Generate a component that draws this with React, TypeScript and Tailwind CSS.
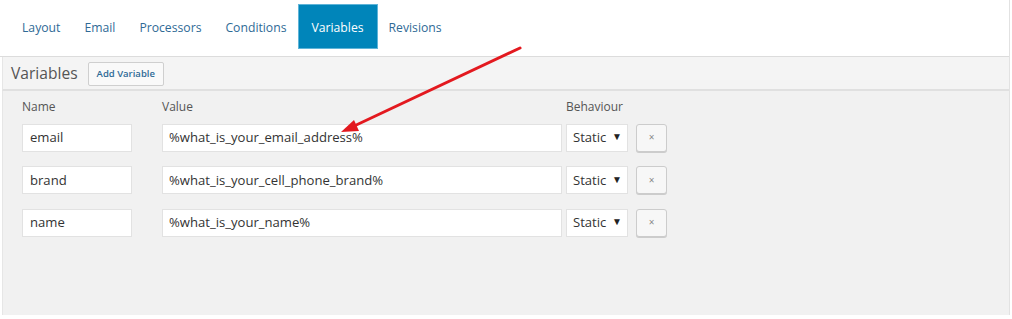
const tabs = ["Layout", "Email", "Processors", "Conditions", "Variables", "Revisions"];

const rows = [
  { name: "email", value: "%what_is_your_email_address%" },
  { name: "brand", value: "%what_is_your_cell_phone_brand%" },
  { name: "name", value: "%what_is_your_name%" },
];

const font = { fontFamily: '"Open Sans", "Liberation Sans", sans-serif' };

export default function App() {
  return (
    <div className="relative w-[1012px] h-[319px] bg-white overflow-hidden" style={font}>
      <div className="w-[1010px] h-[315px] border-r border-[#e2e2e2] flex flex-col">
        {/* Tabs */}
        <div className="h-[57px] shrink-0 border-b border-[#dcdcdc] flex items-start pl-[10px] pt-[5px]">
          {tabs.map((t) =>
            t === "Variables" ? (
              <div
                key={t}
                className="h-[43px] px-[13px] flex items-center bg-[#0085ba] text-white text-[12.2px] shadow-[0_0_0_1px_#5fb4d8] pt-[3px]"
              >
                {t}
              </div>
            ) : (
              <div key={t} className="h-[43px] px-[12px] flex items-center text-[12.2px] text-[#2f6a96] pt-[3px]">
                {t}
              </div>
            )
          )}
        </div>

        {/* Header */}
        <div className="h-[34px] shrink-0 bg-[#f4f4f4] border-b-2 border-[#e0e0e0] border-l border-l-[#e6e6e6] ml-[2px] flex items-center gap-[10px] pl-[8px] pt-[2px]">
          <span className="text-[15.6px] text-[#555]">Variables</span>
          <button className="h-[24px] px-[8px] border border-[#cfcfcf] bg-[#f9f9f9] rounded-[2px] text-[9.5px] font-semibold text-[#2f6a96]">
            Add Variable
          </button>
        </div>

        {/* Body */}
        <div className="flex-1 bg-[#f1f1f1] border-l border-[#e6e6e6] ml-[2px] pl-[19px] pt-[8px]">
          <div className="flex text-[12px] text-[#555] h-[16px] items-center">
            <span className="w-[140px]">Name</span>
            <span className="w-[404px]">Value</span>
            <span>Behaviour</span>
          </div>
          <div className="flex flex-col gap-[13.5px] mt-[8px]">
            {rows.map((r) => (
              <div key={r.name} className="flex items-center h-[29px]">
                <div className="w-[110px] h-[28px] bg-white border border-[#e2e2e2] flex items-center pl-[7px] pt-[1px] text-[13.1px] text-[#333]">
                  {r.name}
                </div>
                <div className="ml-[30px] w-[400px] h-[28px] bg-white border border-[#e2e2e2] flex items-center pl-[6px] pt-[1px] text-[13.1px] text-[#333]">
                  {r.value}
                </div>
                <div className="ml-[4px] w-[62px] h-[28px] bg-white border border-[#e2e2e2] flex items-center justify-between pl-[6px] pr-[5px] pt-[1px] text-[13.1px] text-[#333]">
                  <span>Static</span>
                  <span className="text-[10px] text-[#222] -mt-[3px]">▼</span>
                </div>
                <button className="ml-[8px] w-[31px] h-[28px] bg-[#f7f7f7] border border-[#ccc] rounded-[3px] shadow-[0_1px_0_#ccc] flex items-center justify-center text-[10px] text-[#888]">
                  ×
                </button>
              </div>
            ))}
          </div>
        </div>
      </div>

      {/* Red arrow annotation */}
      <svg className="absolute left-0 top-0 pointer-events-none" width="1012" height="319">
        <line x1="520" y1="48" x2="352" y2="127" stroke="#e3191f" strokeWidth="3" strokeLinecap="round" />
        <polygon points="341,132 354,120 359,131" fill="#e3191f" />
      </svg>
    </div>
  );
}
